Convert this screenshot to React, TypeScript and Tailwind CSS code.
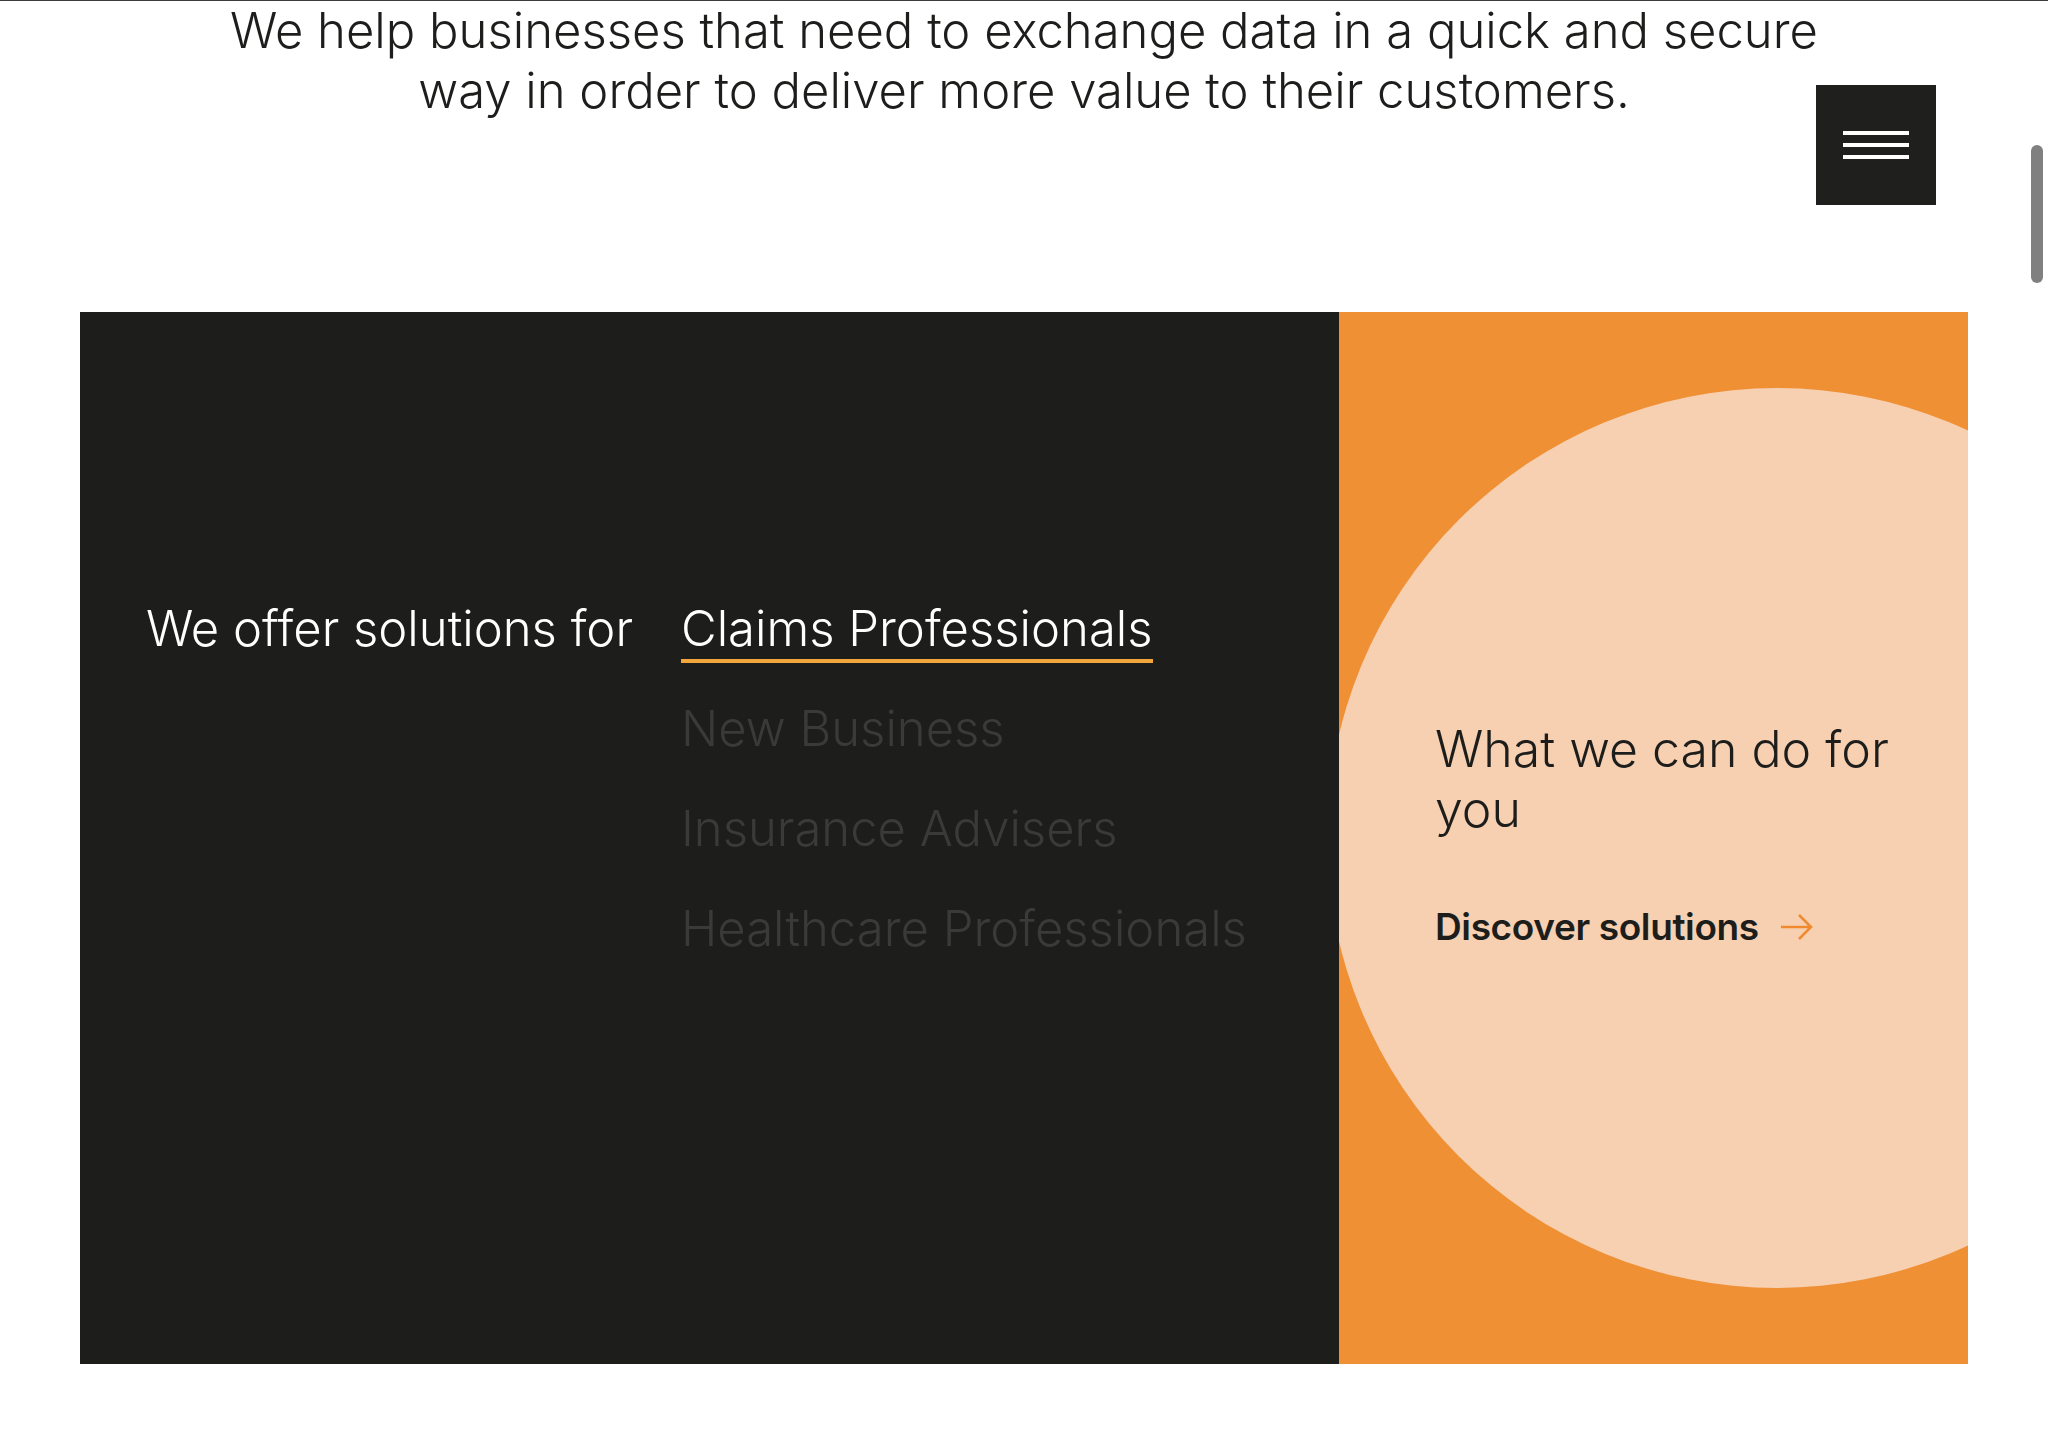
import React from 'react';

const audiences = ['Claims Professionals', 'New Business', 'Insurance Advisers', 'Healthcare Professionals'];

export default function App() {
  return (
    <div className="relative min-h-[1432px] overflow-hidden border-t border-[#3a3a3a] bg-white font-['Inter','Liberation_Sans',sans-serif] text-[#1d1e1c]">
      <p className="text-center text-[49px] font-light leading-[60px]">
        We help businesses that need to exchange data in a quick and secure
        <br />
        way in order to deliver more value to their customers.
      </p>

      <section className="mx-20 mt-[191px] grid h-[1052px] grid-cols-[1259px_629px]">
        {/* left: audiences */}
        <div className="flex bg-[#1d1e1b] pl-[66px] pt-[285px]">
          <p className="w-[535px] shrink-0 text-[49px] font-light leading-[64px] text-white">We offer solutions for</p>
          <ul className="flex flex-col gap-9">
            {audiences.map((a, i) => (
              <li key={a} className="text-[49px] font-light leading-[64px]">
                <span className={i === 0 ? 'relative inline-block text-white' : 'inline-block text-[#3a3b38]'}>
                  {a}
                  {i === 0 && <span className="absolute left-0 right-0 top-[62px] h-1 bg-[#f3a63b]" />}
                </span>
              </li>
            ))}
          </ul>
        </div>

        {/* right: call to action */}
        <div className="relative flex items-center overflow-hidden bg-[#f09035] pb-[8px]">
          <div className="absolute left-[-12px] top-1/2 h-[900px] w-[900px] -translate-y-1/2 rounded-full bg-[#f7d0b2]" />
          <div className="relative pl-[96px]">
            <h3 className="text-[50px] font-light leading-[60px]">
              What we can do for
              <br />
              you
            </h3>
            <a href="#" className="mt-[66px] flex items-center text-[37px] font-semibold leading-[44px] tracking-[-0.01em]">
              Discover solutions
              <svg className="ml-[22px]" width="32" height="26" viewBox="0 0 32 26" fill="none" stroke="#f08a2e" strokeWidth="2.5">
                <path d="M0 13H30M18 1L30 13L18 25" />
              </svg>
            </a>
          </div>
        </div>
      </section>

      {/* menu button */}
      <button className="absolute left-[1816px] top-[84px] flex h-[120px] w-[120px] flex-col items-center justify-center gap-2 bg-[#1f201d]">
        <span className="h-1 w-[66px] bg-white" />
        <span className="h-1 w-[66px] bg-white" />
        <span className="h-1 w-[66px] bg-white" />
      </button>

      {/* scrollbar thumb */}
      <div className="absolute right-[5px] top-[144px] h-[138px] w-[12px] rounded-full bg-[#808080]" />
    </div>
  );
}
